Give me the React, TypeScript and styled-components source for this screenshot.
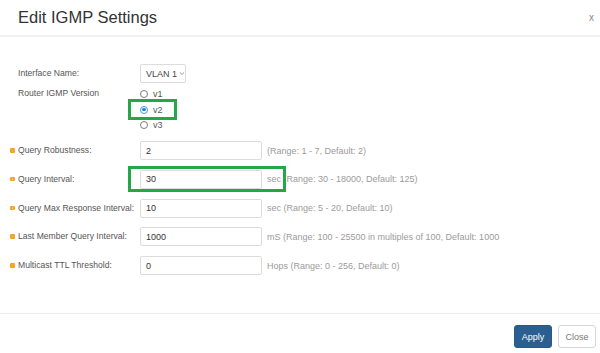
import React from 'react';
import styled, { createGlobalStyle } from 'styled-components';

const GlobalStyle = createGlobalStyle`
  html, body {
    margin: 0;
    padding: 0;
    background: #ffffff;
  }
  * {
    box-sizing: border-box;
  }
`;

const Dialog = styled.div`
  width: 600px;
  height: 353px;
  display: flex;
  flex-direction: column;
  background: #fff;
  font-family: "Liberation Sans", Arial, sans-serif;
  color: #555;
  overflow: hidden;
`;

const Header = styled.div`
  height: 37px;
  flex: none;
  display: flex;
  align-items: center;
  justify-content: space-between;
  padding: 0 6px 0 18px;
  border-bottom: 2px solid #f1f1f1;
`;

const Title = styled.h1`
  margin: 0;
  font-size: 16.5px;
  font-weight: 400;
  color: #333;
  line-height: 1;
  padding-bottom: 1px;
`;

const CloseX = styled.span`
  font-size: 10px;
  color: #888;
  line-height: 1;
`;

const Body = styled.div`
  flex: 1;
  padding: 27px 0 0 18px;
`;

const Row = styled.div<{ $top?: number; $align?: string }>`
  display: grid;
  grid-template-columns: 122px auto;
  align-items: ${p => p.$align || 'center'};
  margin-top: ${p => p.$top || 0}px;
`;

const Label = styled.div<{ $lh?: number }>`
  font-size: 8.6px;
  color: #555;
  line-height: ${p => p.$lh || 19}px;
  white-space: nowrap;
`;

const Bullet = styled.span`
  display: inline-block;
  width: 4.5px;
  height: 4.5px;
  margin-left: -8px;
  margin-right: 3.5px;
  border-radius: 1.2px;
  background: #f5a21e;
  position: relative;
  top: -0.5px;

  &::after {
    content: '';
    display: block;
    width: 1.5px;
    height: 1.5px;
    margin: 1.5px;
    background: #fbd58f;
    border-radius: 1px;
  }
`;

const Select = styled.div`
  width: 46px;
  height: 19px;
  border: 1px solid #dcdcdc;
  border-radius: 2px;
  display: flex;
  align-items: center;
  padding-left: 5px;
  gap: 2px;
  font-size: 9px;
  color: #444;
  white-space: nowrap;
`;

const RadioGroup = styled.div`
  position: relative;
  display: flex;
  flex-direction: column;
`;

const RadioItem = styled.label`
  height: 15.5px;
  display: flex;
  align-items: center;
  gap: 5px;
  font-size: 9px;
  color: #555;
`;

const RadioCircle = styled.span<{ $checked?: boolean }>`
  width: 8px;
  height: 8px;
  border-radius: 50%;
  border: 1px solid ${p => (p.$checked ? '#4a97d8' : '#7a7a7a')};
  display: flex;
  align-items: center;
  justify-content: center;
  &::after {
    content: '';
    width: 3.5px;
    height: 3.5px;
    border-radius: 50%;
    background: ${p => (p.$checked ? '#1f86dc' : 'transparent')};
  }
`;

const Fields = styled.div`
  display: flex;
  flex-direction: column;
  gap: 9.75px;
  margin-top: 8.25px;
`;

const ValueCell = styled.div`
  position: relative;
  display: flex;
  align-items: center;
  height: 19px;
`;

const Input = styled.div`
  width: 122px;
  height: 19px;
  border: 1px solid #dcdcdc;
  border-radius: 2px;
  padding-left: 5px;
  display: flex;
  align-items: center;
  font-size: 9px;
  color: #333;
`;

const Hint = styled.span`
  margin-left: 5px;
  font-size: 9px;
  color: #9b9b9b;
  white-space: nowrap;
`;

const Highlight = styled.div<{ $w: number; $h: number; $l: number; $t: number }>`
  position: absolute;
  left: ${p => p.$l}px;
  top: ${p => p.$t}px;
  width: ${p => p.$w}px;
  height: ${p => p.$h}px;
  border: 3px solid #22a846;
  pointer-events: none;
`;

const Footer = styled.div`
  height: 40px;
  flex: none;
  border-top: 1px solid #ececec;
  display: flex;
  justify-content: flex-end;
  align-items: flex-start;
  gap: 6px;
  padding: 11px 4px 0 0;
`;

const Button = styled.button<{ $primary?: boolean }>`
  width: 38px;
  height: 23px;
  border-radius: 3px;
  font-family: "Liberation Sans", Arial, sans-serif;
  font-size: 9px;
  padding: 0;
  border: 1px solid ${p => (p.$primary ? '#265a88' : '#d6d6d6')};
  background: ${p => (p.$primary ? '#2a5f8f' : '#fff')};
  color: ${p => (p.$primary ? '#fff' : '#777')};
`;

const Chevron = () => (
  <svg width="7" height="5" viewBox="0 0 7 5">
    <path d="M1 1.2 L3.5 3.6 L6 1.2" fill="none" stroke="#777" strokeWidth="0.9" />
  </svg>
);

const fields = [
  { label: 'Query Robustness:', value: '2', hint: '(Range: 1 - 7, Default: 2)' },
  { label: 'Query Interval:', value: '30', hint: 'sec (Range: 30 - 18000, Default: 125)', mark: true },
  { label: 'Query Max Response Interval:', value: '10', hint: 'sec (Range: 5 - 20, Default: 10)' },
  { label: 'Last Member Query Interval:', value: '1000', hint: 'mS (Range: 100 - 25500 in multiples of 100, Default: 1000' },
  { label: 'Multicast TTL Threshold:', value: '0', hint: 'Hops (Range: 0 - 256, Default: 0)' },
];

export default function App() {
  return (
    <>
      <GlobalStyle />
      <Dialog>
        <Header>
          <Title>Edit IGMP Settings</Title>
          <CloseX>x</CloseX>
        </Header>

        <Body>
          <Row>
            <Label>Interface Name:</Label>
            <div>
              <Select>
                VLAN 1 <Chevron />
              </Select>
            </div>
          </Row>

          <Row $top={3.25} $align="start">
            <Label $lh={15.5}>Router IGMP Version</Label>
            <RadioGroup>
              <RadioItem>
                <RadioCircle /> v1
              </RadioItem>
              <RadioItem>
                <RadioCircle $checked /> v2
              </RadioItem>
              <RadioItem>
                <RadioCircle /> v3
              </RadioItem>
              <Highlight $l={-12} $t={12.5} $w={49} $h={21.5} />
            </RadioGroup>
          </Row>

          <Fields>
            {fields.map(f => (
              <Row key={f.label}>
                <Label>
                  <Bullet />
                  {f.label}
                </Label>
                <ValueCell>
                  <Input>{f.value}</Input>
                  <Hint>{f.hint}</Hint>
                  {f.mark && <Highlight $l={-12} $t={-4} $w={158} $h={26} />}
                </ValueCell>
              </Row>
            ))}
          </Fields>
        </Body>

        <Footer>
          <Button $primary>Apply</Button>
          <Button>Close</Button>
        </Footer>
      </Dialog>
    </>
  );
}
